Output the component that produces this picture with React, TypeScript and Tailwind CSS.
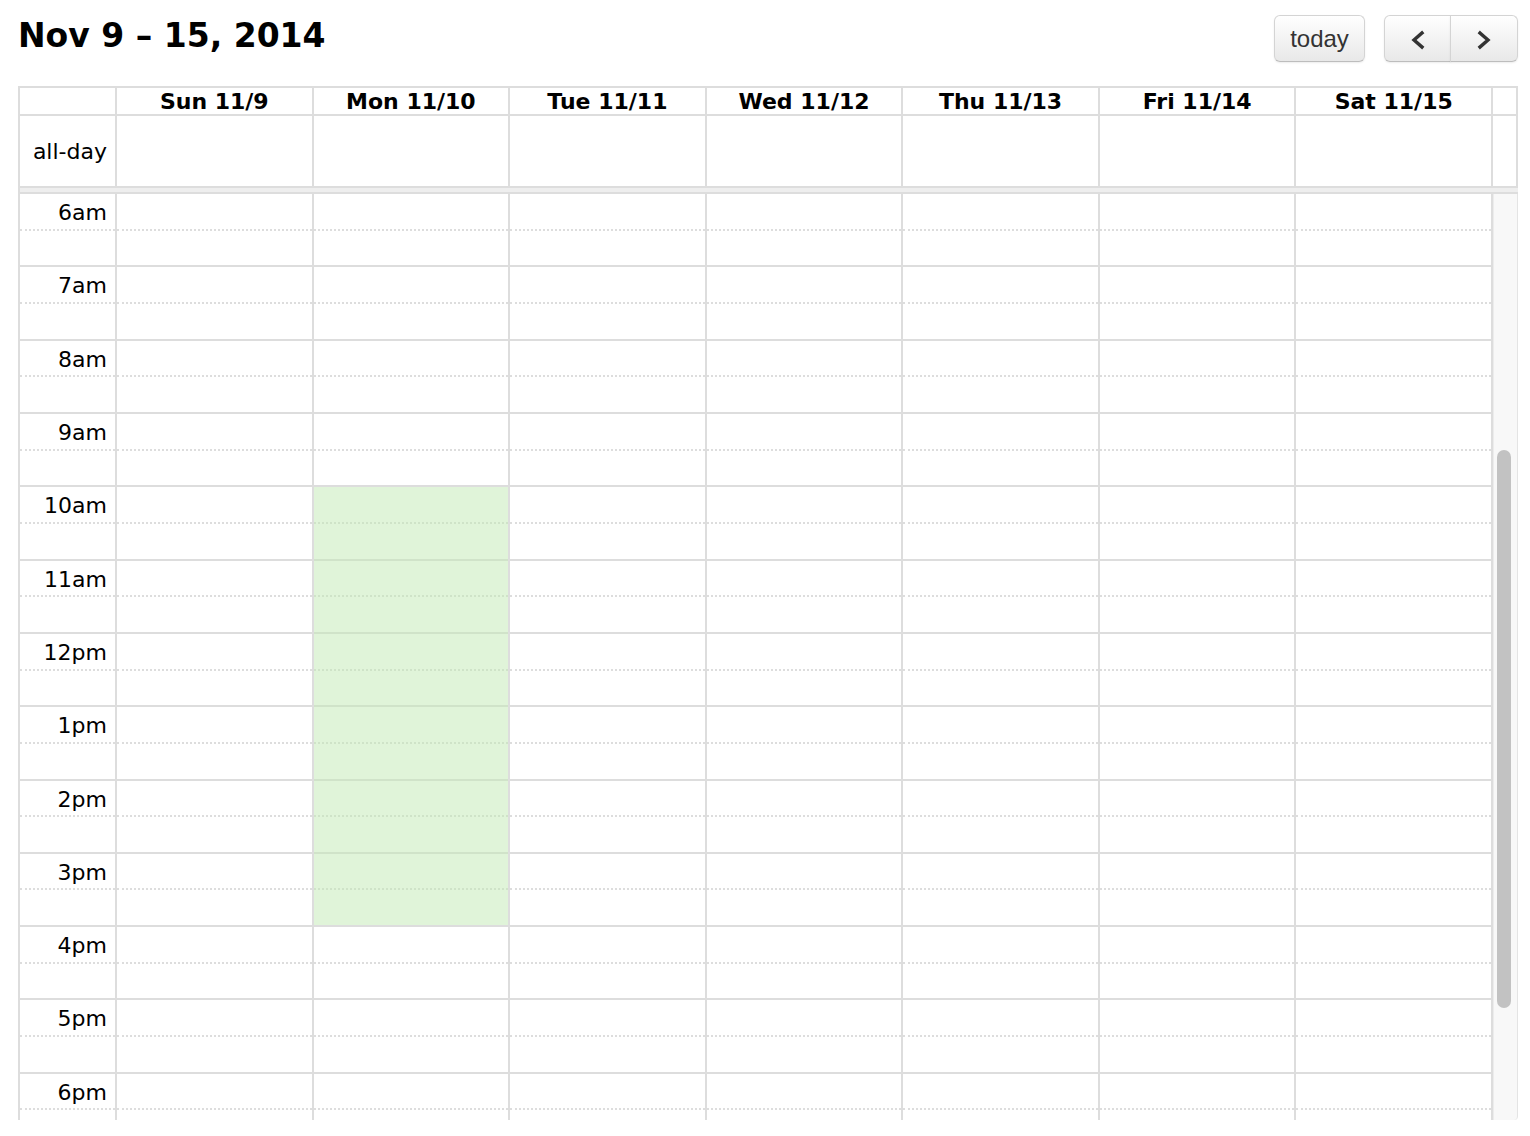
import React from 'react'

const days = ['Sun 11/9', 'Mon 11/10', 'Tue 11/11', 'Wed 11/12', 'Thu 11/13', 'Fri 11/14', 'Sat 11/15']
const hours = ['6am', '7am', '8am', '9am', '10am', '11am', '12pm', '1pm', '2pm', '3pm', '4pm', '5pm', '6pm']

// background event: Monday, 10am - 4pm
const isEvent = (day: number, hour: number) => day === 1 && hour >= 4 && hour <= 9

function Button({ children, className }: { children: React.ReactNode; className?: string }) {
    return (
        <button
            className={
                'flex h-[47px] items-center justify-center border border-[#d4d4d4] border-b-[#bdbdbd] bg-gradient-to-b from-white to-[#e8e8e8] text-[#333] shadow-[0_1px_2px_rgba(0,0,0,0.08)] ' +
                (className || '')
            }
        >
            {children}
        </button>
    )
}

function Chevron({ dir }: { dir: 'left' | 'right' }) {
    return (
        <svg width="16" height="20" viewBox="0 0 16 20" fill="none">
            <polyline
                points={dir === 'left' ? '12,3 4,10 12,17' : '4,3 12,10 4,17'}
                stroke="#333"
                strokeWidth="3.4"
                strokeLinecap="square"
                strokeLinejoin="miter"
            />
        </svg>
    )
}

function App() {
    return (
        <div className="min-h-screen bg-white font-['DejaVu_Sans',sans-serif] text-black">
            <div className="w-[1518px] pl-[18px]">
                {/* toolbar */}
                <div className="flex h-[86px] items-start justify-between">
                    <h2 className="mt-[19px] text-[33px] font-bold leading-none">Nov 9 – 15, 2014</h2>
                    <div className="mt-[15px] flex gap-[19px] font-['Liberation_Sans',sans-serif] text-[24px]">
                        <Button className="w-[91px] rounded-[6px]">today</Button>
                        <div className="flex">
                            <Button className="w-[67px] rounded-l-[6px] pt-[2px]">
                                <Chevron dir="left" />
                            </Button>
                            <Button className="-ml-px w-[68px] rounded-r-[6px] pt-[2px]">
                                <Chevron dir="right" />
                            </Button>
                        </div>
                    </div>
                </div>

                {/* calendar */}
                <div className="border-l-2 border-t-2 border-[#dddddd]">
                    {/* day headings */}
                    <div className="grid grid-cols-[97px_repeat(7,minmax(0,1fr))_25px]">
                        <div className="h-[28px] border-b-2 border-r-2 border-[#dddddd]" />
                        {days.map((d) => (
                            <div
                                key={d}
                                className="h-[28px] border-b-2 border-r-2 border-[#dddddd] text-center text-[22px] font-bold leading-[28px]"
                            >
                                {d}
                            </div>
                        ))}
                        <div className="h-[28px] border-b-2 border-r-2 border-[#dddddd]" />
                    </div>

                    {/* all-day row */}
                    <div className="grid grid-cols-[97px_repeat(7,minmax(0,1fr))_25px]">
                        <div className="flex h-[72px] items-center justify-end border-b-2 border-r-2 border-[#dddddd] pr-[8px] text-[22px]">
                            all-day
                        </div>
                        {days.map((d) => (
                            <div key={d} className="h-[72px] border-b-2 border-r-2 border-[#dddddd]" />
                        ))}
                        <div className="h-[72px] border-b-2 border-r-2 border-[#dddddd]" />
                    </div>
                    <div className="h-[6px] border-b-2 border-[#dddddd] bg-[#eeeeee]" />

                    {/* time grid */}
                    <div className="flex h-[926px]">
                        <div className="flex-1 overflow-hidden">
                            {hours.map((h, hi) => (
                                <div key={h} className="grid grid-cols-[97px_repeat(7,minmax(0,1fr))]">
                                    <div className="border-r-2 border-[#dddddd]">
                                        <div className="h-[36.67px] border-b-2 border-dotted border-[#dddddd] pr-[8px] pt-[6px] text-right text-[22px] leading-[26px]">
                                            {h}
                                        </div>
                                        <div className="h-[36.67px] border-b-2 border-[#dddddd]" />
                                    </div>
                                    {days.map((d, di) => {
                                        const ev = isEvent(di, hi)
                                        return (
                                            <div key={d} className={'border-r-2 border-[#dddddd] ' + (ev ? 'bg-[#e0f4d9]' : '')}>
                                                <div
                                                    className={
                                                        'h-[36.67px] border-b-2 border-dotted ' +
                                                        (ev ? 'border-[#cfe3c8]' : 'border-[#dddddd]')
                                                    }
                                                />
                                                <div
                                                    className={
                                                        'h-[36.67px] border-b-2 ' +
                                                        (ev && hi < 9 ? 'border-[#d0e3c9]' : 'border-[#dddddd]')
                                                    }
                                                />
                                            </div>
                                        )
                                    })}
                                </div>
                            ))}
                        </div>
                        {/* scrollbar */}
                        <div className="w-[25px] rounded-br-[4px] border-r border-[#e4e4e4] bg-[#f8f8f8] pl-[4px] pt-[256px] shadow-[inset_1px_0_0_#ececec]">
                            <div className="h-[558px] w-[14px] rounded-full bg-[#c2c2c2]" />
                        </div>
                    </div>
                </div>
            </div>
        </div>
    )
}

export default App
